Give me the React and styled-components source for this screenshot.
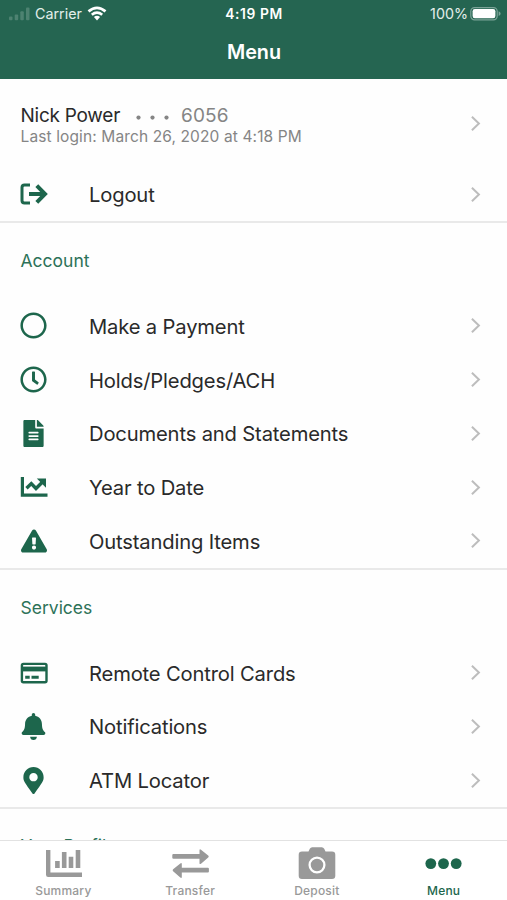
import React from 'react';
import styled, { createGlobalStyle, ThemeProvider } from 'styled-components';
import {
  FaBell,
  FaExclamationTriangle,
  FaFileAlt,
  FaMapMarkerAlt,
  FaRegCircle,
  FaRegClock,
} from 'react-icons/fa';

const theme = {
  fonts: { main: 'Inter, "Liberation Sans", sans-serif' },
  color: {
    header: '#256551',
    green: '#1d664c',
    title: '#2d7258',
    text: '#2a2a2a',
    muted: '#858585',
    tab: '#999999',
    line: '#e9e9e9',
    chevron: '#bdbdbd',
  },
};

const GlobalStyle = createGlobalStyle`
  * {
    box-sizing: border-box;
  }

  body {
    margin: 0;
    background: #fff;
    overflow: hidden;
  }
`;

const Screen = styled.div`
  display: flex;
  flex-direction: column;
  width: 507px;
  height: 900px;
  background: #fefefe;
  font-family: ${({ theme }) => theme.fonts.main};
  color: ${({ theme }) => theme.color.text};
  white-space: nowrap;
`;

const Header = styled.header`
  flex: none;
  height: 79px;
  background: ${({ theme }) => theme.color.header};
  color: #fff;
`;

const StatusBar = styled.div`
  display: grid;
  grid-template-columns: 1fr auto 1fr;
  align-items: center;
  height: 27px;
  padding: 0 6px 0 9px;
  font-size: 14.3px;
`;

const StatusGroup = styled.div`
  display: flex;
  align-items: center;
  justify-content: ${({ $end }) => ($end ? 'flex-end' : 'flex-start')};
  gap: ${({ $end }) => ($end ? '2px' : '5px')};
  color: #e3eeea;
`;

const Clock = styled.div`
  margin-right: 2px;
  font-size: 13.8px;
  font-weight: 600;
  letter-spacing: 0.6px;
`;

const HeaderTitle = styled.h1`
  margin: 0;
  padding-left: 1px;
  font-size: 19.8px;
  line-height: 51px;
  font-weight: 600;
  text-align: center;
`;

const Content = styled.main`
  flex: 1;
  min-height: 0;
  overflow: hidden;
`;

const Profile = styled.div`
  display: flex;
  align-items: center;
  justify-content: space-between;
  height: 88.2px;
  padding: 0 26px 0 20.5px;
`;

const ProfileDetails = styled.div`
  padding-top: 6px;
`;

const ProfileName = styled.div`
  display: flex;
  align-items: center;
  font-size: 19px;
  line-height: 22px;
  letter-spacing: -0.25px;
`;

const AccountDigits = styled.span`
  letter-spacing: 0.1px;
  color: ${({ theme }) => theme.color.muted};
`;

const Mask = styled.svg`
  margin: 3px 10.5px 0 15.5px;
`;

const LastLogin = styled.div`
  font-size: 15.5px;
  line-height: 20px;
  letter-spacing: 0.12px;
  color: ${({ theme }) => theme.color.muted};
`;

const Section = styled.section`
  border-bottom: 2px solid ${({ theme }) => theme.color.line};
`;

const SectionTitle = styled.h2`
  height: 76px;
  margin: 0;
  padding: 0 20.5px;
  font-size: 17.5px;
  line-height: ${({ $partial }) => ($partial ? 73 : 75)}px;
  font-weight: 400;
  color: ${({ theme }) => theme.color.title};
`;

const Row = styled.div`
  display: flex;
  align-items: center;
  height: 53.75px;
  padding: 0 26px 0 19.7px;
`;

const RowIcon = styled.span`
  display: flex;
  justify-content: center;
  width: 28px;
  margin-right: 41.3px;
  color: ${({ theme }) => theme.color.green};
`;

const RowLabel = styled.span`
  flex: 1;
  padding-top: 1px;
  font-size: 20.2px;
  letter-spacing: -0.16px;
`;

const TabBar = styled.nav`
  display: grid;
  flex: none;
  grid-template-columns: repeat(4, 1fr);
  height: 60px;
  border-top: 1px solid #e2e2e2;
  background: #fff;
`;

const Tab = styled.div`
  display: flex;
  flex-direction: column;
  align-items: center;
  padding-top: 4px;
  color: ${({ theme, $active }) => ($active ? theme.color.green : theme.color.tab)};
`;

const TabIcon = styled.span`
  display: flex;
  align-items: center;
  height: 37px;
`;

const TabLabel = styled.span`
  font-size: 12px;
  line-height: 18px;
  font-weight: 500;
  letter-spacing: 0.2px;
`;

const Chevron = () => (
  <svg width="11" height="17" viewBox="0 0 11 17" fill="none" stroke={theme.color.chevron} strokeWidth="2">
    <path d="M1.9 1.8 L8.9 8.5 L1.9 15.2" />
  </svg>
);

const LogoutIcon = () => (
  <svg width="28" height="22" viewBox="0 0 28 22" fill="none" stroke="currentColor">
    <path d="M10 2H4.5Q2 2 2 4.5V17.5Q2 20 4.5 20H10" strokeWidth="3" />
    <path d="M9 11H24.5M16.8 2.7L25 11L16.8 19.3" strokeWidth="4" />
  </svg>
);

const TrendIcon = () => (
  <svg width="28" height="22" viewBox="0 0 28 22" fill="none" stroke="currentColor">
    <path d="M2.4 1V19.2H27.5" strokeWidth="3.2" />
    <path d="M6.5 12.2L11.3 7.6L16 12.5L22.5 6" strokeWidth="3.4" />
    <path d="M16.8 2.6H26V11.8Z" fill="currentColor" stroke="none" />
  </svg>
);

const CardIcon = () => (
  <svg width="28" height="22" viewBox="0 0 28 22" fill="none" stroke="currentColor">
    <rect x="1.9" y="1.9" width="24.6" height="18.4" rx="1.5" strokeWidth="2.4" />
    <path d="M2 7H26" strokeWidth="4.8" />
    <path d="M5.2 15.2H9.7M11.5 15.2H18.7" strokeWidth="3" />
  </svg>
);

const BarsIcon = () => (
  <svg width="38" height="28" viewBox="0 0 38 28" fill="none" stroke="currentColor">
    <path d="M4.2 0V24.8H38" strokeWidth="4.4" strokeLinejoin="round" />
    <path d="M13.4 11V18M20.2 2V18M27 6.7V18M34 0V18" strokeWidth="4.6" />
  </svg>
);

const TransferIcon = () => (
  <svg width="38" height="30" viewBox="0 0 38 30" fill="currentColor">
    <path d="M2.5 5H28.5V1.5Q28.5 -.5 30 .7L37.2 6.5Q38.2 7.5 37.2 8.5L30 14.7Q28.5 15.8 28.5 13.9V9.8H2.5Q1.3 9.8 1.3 8.8V6Q1.3 5 2.5 5Z" />
    <path d="M36.9 18.8H10.8V15.3Q10.8 13.3 9.3 14.5L2.1 20.3Q1.1 21.3 2.1 22.3L9.3 28.5Q10.8 29.6 10.8 27.7V23.6H36.9Q37.9 23.6 37.9 22.6V19.8Q37.9 18.8 36.9 18.8Z" />
  </svg>
);

const CameraIcon = () => (
  <svg width="38" height="34" viewBox="0 0 38 34" fill="currentColor">
    <path d="M4 4.5H10.5L11.8 1.7Q12.6.2 14.2.2H23.8Q25.4.2 26.2 1.7L27.5 4.5H34Q37.3 4.5 37.3 7.8V28.7Q37.3 32 34 32H4Q.7 32 .7 28.7V7.8Q.7 4.5 4 4.5Z" />
    <circle cx="19" cy="18" r="7.4" fill="none" stroke="#fff" strokeWidth="2.3" />
  </svg>
);

const DotsIcon = () => (
  <svg width="37" height="12" viewBox="0 0 37 12" fill="currentColor">
    <circle cx="5.8" cy="5.6" r="5.4" />
    <circle cx="18.5" cy="5.6" r="5.4" />
    <circle cx="31.2" cy="5.6" r="5.4" />
  </svg>
);

const SignalIcon = () => (
  <svg width="21" height="14" viewBox="0 0 21 14" fill="#4d8271">
    <rect x="0" y="9.5" width="3.5" height="3.8" rx="1" />
    <rect x="5.7" y="7.5" width="3.5" height="5.8" rx="1" />
    <rect x="11.3" y="4.2" width="3.5" height="9.1" rx="1" />
    <rect x="17" y="0.5" width="3.5" height="12.8" rx="1" />
  </svg>
);

const WifiIcon = () => (
  <svg width="20" height="15" viewBox="0 0 20 15" fill="none" stroke="#fff" strokeWidth="2.7">
    <path d="M1.5 5.4Q10 -1.8 18.5 5.4" />
    <path d="M4.8 8.8Q10 4.6 15.2 8.8" />
    <path d="M6.9 11.1Q10 8.6 13.1 11.1L10 14.4Z" fill="#fff" stroke="none" />
  </svg>
);

const BatteryIcon = () => (
  <svg width="31" height="14" viewBox="0 0 31 14">
    <rect x="0.8" y="0.6" width="26.4" height="12.2" rx="3.7" fill="none" stroke="#7ba397" strokeWidth="1.2" />
    <rect x="2.6" y="2.1" width="22.8" height="9.2" rx="2.2" fill="#fff" />
    <path d="M28.6 4.3Q30.6 5.3 30.6 6.7T28.6 9.1Z" fill="#7ba397" />
  </svg>
);

const sections = [
  {
    title: 'Account',
    items: [
      { label: 'Make a Payment', icon: <FaRegCircle size={27} /> },
      { label: 'Holds/Pledges/ACH', icon: <FaRegClock size={27} /> },
      { label: 'Documents and Statements', icon: <FaFileAlt size={27} /> },
      { label: 'Year to Date', icon: <TrendIcon /> },
      { label: 'Outstanding Items', icon: <FaExclamationTriangle size={26} /> },
    ],
  },
  {
    title: 'Services',
    items: [
      { label: 'Remote Control Cards', icon: <CardIcon /> },
      { label: 'Notifications', icon: <FaBell size={27} /> },
      { label: 'ATM Locator', icon: <FaMapMarkerAlt size={27} /> },
    ],
  },
];

const tabs = [
  { label: 'Summary', icon: <BarsIcon /> },
  { label: 'Transfer', icon: <TransferIcon /> },
  { label: 'Deposit', icon: <CameraIcon /> },
  { label: 'Menu', icon: <DotsIcon />, active: true },
];

function MenuRow({ icon, label }) {
  return (
    <Row>
      <RowIcon>{icon}</RowIcon>
      <RowLabel>{label}</RowLabel>
      <Chevron />
    </Row>
  );
}

function App() {
  return (
    <ThemeProvider theme={theme}>
      <GlobalStyle />
      <Screen>
        <Header>
          <StatusBar>
            <StatusGroup>
              <SignalIcon />
              <span>Carrier</span>
              <WifiIcon />
            </StatusGroup>
            <Clock>4:19 PM</Clock>
            <StatusGroup $end>
              <span>100%</span>
              <BatteryIcon />
            </StatusGroup>
          </StatusBar>
          <HeaderTitle>Menu</HeaderTitle>
        </Header>
        <Content>
          <Section>
            <Profile>
              <ProfileDetails>
                <ProfileName>
                  <span>Nick Power</span>
                  <Mask width="35" height="6" viewBox="0 0 35 6" fill={theme.color.muted}>
                    <circle cx="2.5" cy="2.6" r="2.1" />
                    <circle cx="16.5" cy="2.6" r="2.1" />
                    <circle cx="30.5" cy="2.6" r="2.1" />
                  </Mask>
                  <AccountDigits>6056</AccountDigits>
                </ProfileName>
                <LastLogin>Last login: March 26, 2020 at 4:18 PM</LastLogin>
              </ProfileDetails>
              <Chevron />
            </Profile>
            <MenuRow icon={<LogoutIcon />} label="Logout" />
          </Section>
          {sections.map(({ title, items }) => (
            <Section key={title}>
              <SectionTitle>{title}</SectionTitle>
              {items.map((item) => (
                <MenuRow key={item.label} {...item} />
              ))}
            </Section>
          ))}
          <SectionTitle $partial>Your Profile</SectionTitle>
        </Content>
        <TabBar>
          {tabs.map(({ label, icon, active }) => (
            <Tab key={label} $active={active}>
              <TabIcon>{icon}</TabIcon>
              <TabLabel>{label}</TabLabel>
            </Tab>
          ))}
        </TabBar>
      </Screen>
    </ThemeProvider>
  );
}

export default App;
